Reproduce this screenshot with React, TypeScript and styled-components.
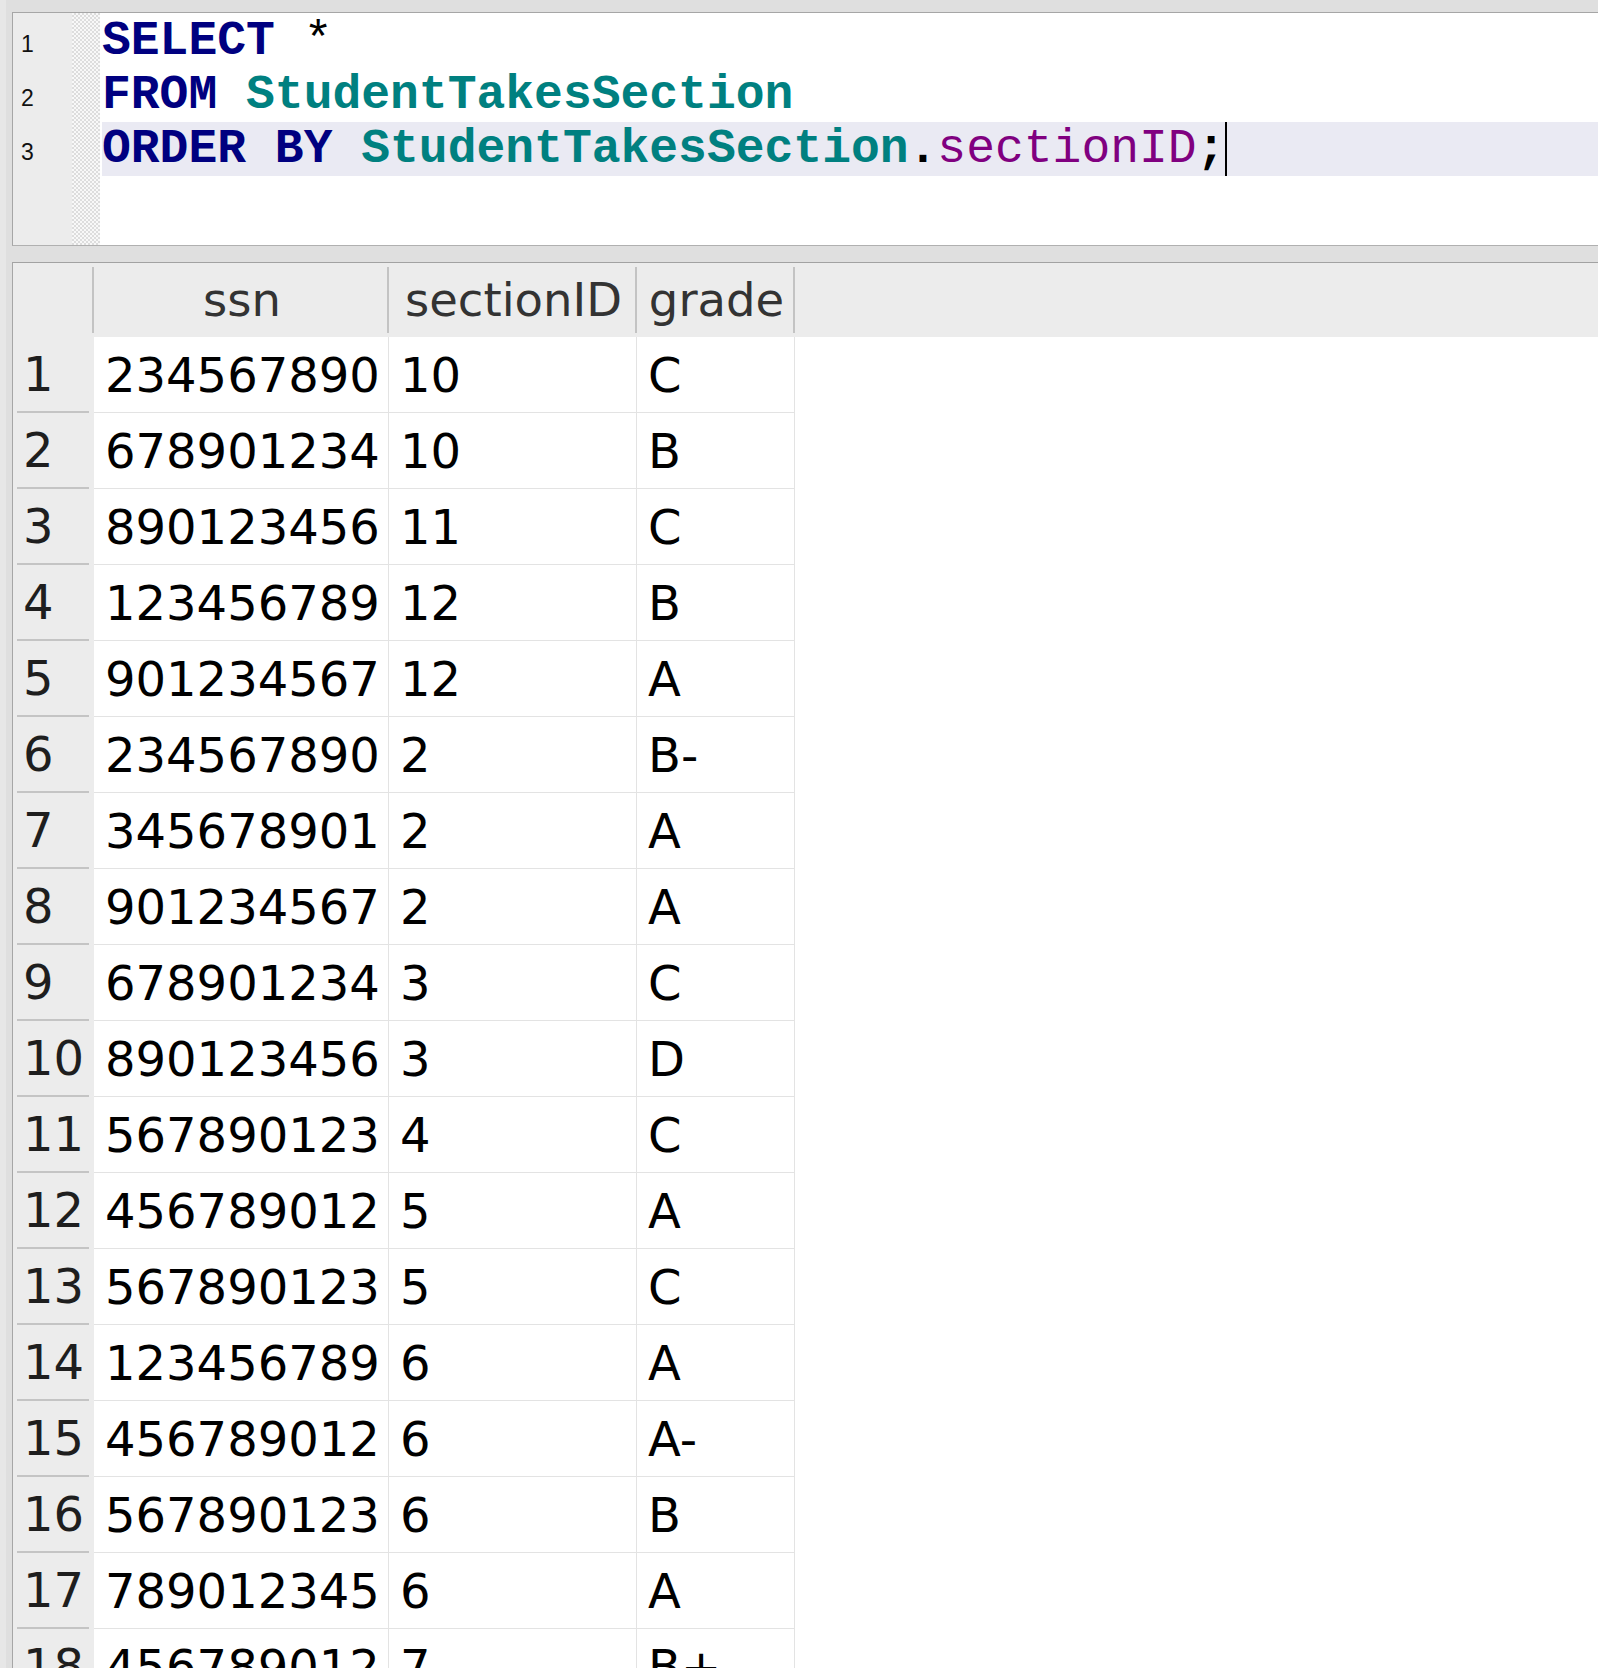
import React from "react";
import styled, { createGlobalStyle } from "styled-components";

const Global = createGlobalStyle`
  html, body {
    margin: 0;
    padding: 0;
    background: #dfdfdf;
    overflow: hidden;
  }
  * { box-sizing: border-box; }
`;

const Page = styled.div`
  height: 100vh;
  overflow: hidden;
  background: #dfdfdf;
  border-left: 6px solid #e7e7e7;
  padding: 12px 0 0 6px;
  display: flex;
  flex-direction: column;
  gap: 16px;
`;

const Editor = styled.div`
  display: flex;
  height: 234px;
  flex: none;
  border-top: 1px solid #a6a6a6;
  border-left: 1px solid #a6a6a6;
  border-bottom: 1px solid #b0b0b0;
  background: #fff;
`;

const Gutter = styled.div`
  width: 59px;
  flex: none;
  background: #ececec;
  padding-top: 1px;
`;

const LineNo = styled.div`
  height: 54px;
  padding: 6px 0 0 8px;
  line-height: 48px;
  font-family: "Liberation Sans", Arial, sans-serif;
  font-size: 23px;
  color: #111;
`;

const FoldStrip = styled.div`
  width: 28px;
  flex: none;
  background-color: #f6f6f6;
  background-image: repeating-conic-gradient(#dddddd 0 25%, #f8f8f8 0 50%);
  background-size: 4px 4px;
`;

const CodeArea = styled.div`
  flex: 1;
  padding: 1px 0 0 2px;
  background: #fff;
  font-family: "Liberation Mono", "Courier New", monospace;
  font-size: 48px;
  line-height: 54px;
  white-space: pre;
`;

const CodeLine = styled.div<{ $current?: boolean }>`
  height: 54px;
  background: ${(p) => (p.$current ? "#eaeaf3" : "transparent")};
`;

const Tok = styled.span<{ $kind: "kw" | "tbl" | "col" | "punct" | "op" }>`
  font-weight: ${(p) => (p.$kind === "col" || p.$kind === "op" ? 400 : 700)};
  color: ${(p) =>
    p.$kind === "kw"
      ? "#000080"
      : p.$kind === "tbl"
      ? "#008080"
      : p.$kind === "col"
      ? "#800080"
      : "#000"};
`;

const Caret = styled.span`
  display: inline-block;
  width: 2px;
  height: 54px;
  vertical-align: top;
  background: #000;
`;

const Results = styled.div`
  flex: 1;
  border-top: 1px solid #a2a2a2;
  border-left: 1px solid #a6a6a6;
  background: #fff;
  font-family: "DejaVu Sans", "Lucida Grande", sans-serif;
  overflow: hidden;
`;

const HeaderRow = styled.div`
  display: flex;
  align-items: center;
  height: 74px;
  background: #ececec;
`;

const HeaderCell = styled.div<{ $w: number }>`
  width: ${(p) => p.$w}px;
  flex: none;
  height: 66px;
  line-height: 66px;
  border-right: 2px solid #c3c3c3;
  text-align: center;
  font-size: 46.5px;
  color: #333;
  padding-left: 3px;
`;

const DataRow = styled.div`
  display: flex;
  height: 76px;
`;

const RowNumCell = styled.div`
  width: 81px;
  flex: none;
  background: #ececec;
  padding: 0 5px 0 4px;
`;

const RowNumBox = styled.div`
  height: 76px;
  border-bottom: 2px solid #c4c4c4;
  padding-left: 6px;
  line-height: 75px;
  font-size: 48px;
  color: #1e1e1e;
  white-space: nowrap;
`;

const Cell = styled.div<{ $w: number }>`
  width: ${(p) => p.$w}px;
  flex: none;
  height: 76px;
  border-right: 1px solid #e3e3e3;
  border-bottom: 1px solid #e3e3e3;
  padding-left: 11px;
  line-height: 76px;
  font-size: 48px;
  color: #000;
  white-space: nowrap;
`;

const cols = [
  { key: "ssn", w: 295 },
  { key: "sectionID", w: 248 },
  { key: "grade", w: 158 },
];

const rows: [string, string, string][] = [
  ["234567890", "10", "C"],
  ["678901234", "10", "B"],
  ["890123456", "11", "C"],
  ["123456789", "12", "B"],
  ["901234567", "12", "A"],
  ["234567890", "2", "B-"],
  ["345678901", "2", "A"],
  ["901234567", "2", "A"],
  ["678901234", "3", "C"],
  ["890123456", "3", "D"],
  ["567890123", "4", "C"],
  ["456789012", "5", "A"],
  ["567890123", "5", "C"],
  ["123456789", "6", "A"],
  ["456789012", "6", "A-"],
  ["567890123", "6", "B"],
  ["789012345", "6", "A"],
  ["456789012", "7", "B+"],
];

export default function App() {
  return (
    <>
      <Global />
      <Page>
        <Editor>
          <Gutter>
            <LineNo>1</LineNo>
            <LineNo>2</LineNo>
            <LineNo>3</LineNo>
          </Gutter>
          <FoldStrip />
          <CodeArea>
            <CodeLine>
              <Tok $kind="kw">SELECT</Tok>
              <Tok $kind="op"> *</Tok>
            </CodeLine>
            <CodeLine>
              <Tok $kind="kw">FROM</Tok> <Tok $kind="tbl">StudentTakesSection</Tok>
            </CodeLine>
            <CodeLine $current>
              <Tok $kind="kw">ORDER BY</Tok> <Tok $kind="tbl">StudentTakesSection</Tok>
              <Tok $kind="punct">.</Tok>
              <Tok $kind="col">sectionID</Tok>
              <Tok $kind="punct">;</Tok>
              <Caret />
            </CodeLine>
          </CodeArea>
        </Editor>
        <Results>
          <HeaderRow>
            <HeaderCell $w={81} />
            {cols.map((c) => (
              <HeaderCell key={c.key} $w={c.w}>
                {c.key}
              </HeaderCell>
            ))}
          </HeaderRow>
          {rows.map((r, i) => (
            <DataRow key={i}>
              <RowNumCell>
                <RowNumBox>{i + 1}</RowNumBox>
              </RowNumCell>
              {r.map((v, j) => (
                <Cell key={j} $w={cols[j].w}>
                  {v}
                </Cell>
              ))}
            </DataRow>
          ))}
        </Results>
      </Page>
    </>
  );
}
